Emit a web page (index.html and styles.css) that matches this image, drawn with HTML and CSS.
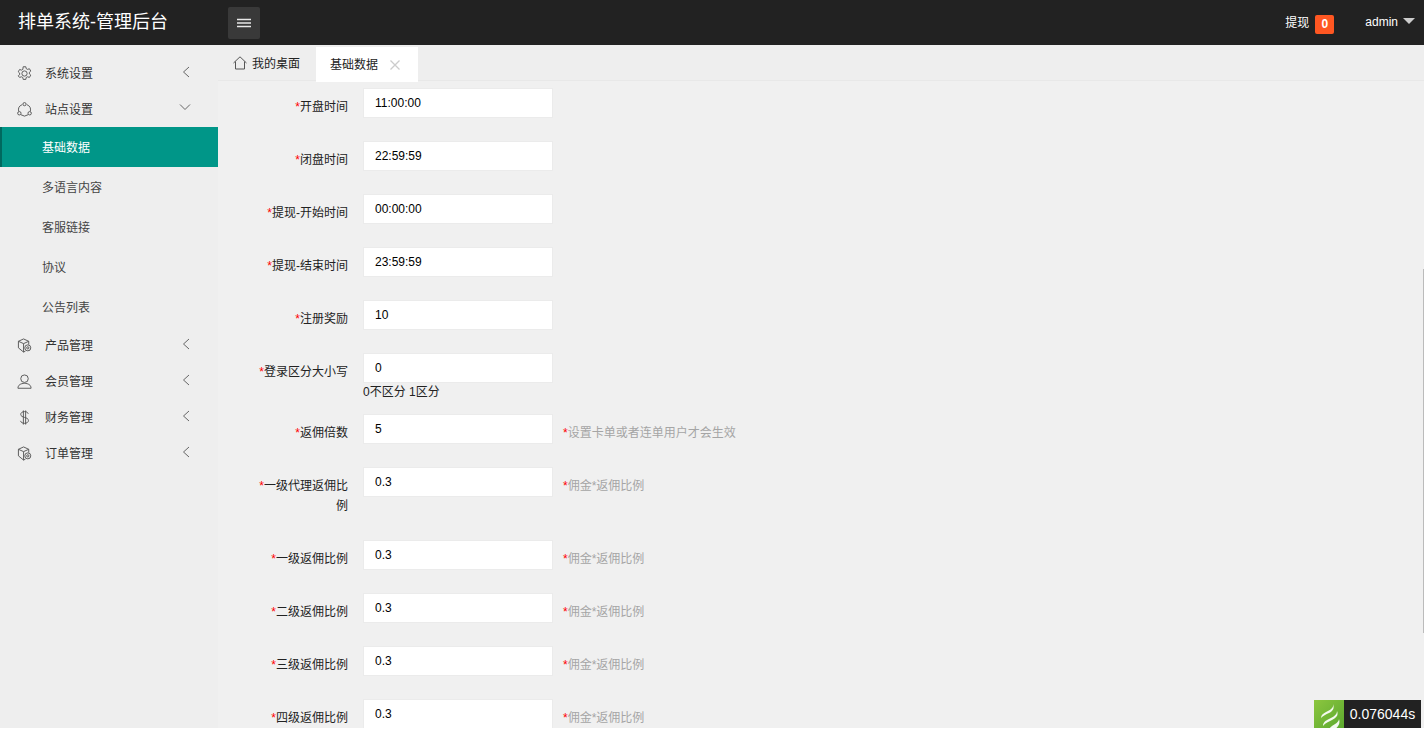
FILE: index.html
```html
<!DOCTYPE html>
<html lang="zh-CN">
<head>
<meta charset="utf-8">
<title>排单系统-管理后台</title>
<link rel="stylesheet" href="styles.css">
</head>
<body>
<div class="app">
  <header class="topbar">
    <div class="logo">排单系统-管理后台</div>
    <button class="toggle" aria-label="菜单">
      <svg width="14" height="10" viewBox="0 0 14 10"><path d="M0 1.500h14M0 5h14M0 8.500h14" stroke="#e8e8e8" stroke-width="1.300" fill="none"/></svg>
    </button>
    <div class="top-right">
      <span class="withdraw">提现</span><span class="badge">0</span>
      <span class="user">admin</span><span class="caret"></span>
    </div>
  </header>
  <div class="body">
    <aside class="side">
      <div class="menu">
        <svg class="micon" viewBox="0 0 16 16"><circle cx="8" cy="8" r="2.800"/><path d="M6.600 .8h2.800l.4 2 1.500.8 1.900-.7 1.500 2.500-1.500 1.300v1.700l1.500 1.300-1.500 2.500-1.900-.7-1.500.8-.4 2H6.600l-.4-2-1.500-.8-1.900.7L1.300 10.500l1.500-1.300V7.500L1.300 6.200l1.500-2.500 1.900.7 1.500-.8z"/></svg>
        <span class="mtext">系统设置</span>
        <svg class="arrow" viewBox="0 0 8 12"><path d="M7 1 1.500 6 7 11"/></svg>
      </div>
      <div class="menu">
        <svg class="micon" viewBox="0 0 16 16"><path d="M5.500 2.800A6.200 6.200 0 0 0 1.800 10M10.500 2.800A6.200 6.200 0 0 1 14.200 10M4 13.500a6.500 6.500 0 0 0 8 0"/><circle cx="8" cy="2.300" r="1.700"/><circle cx="2.500" cy="12" r="1.800"/><circle cx="13.500" cy="12" r="1.800"/></svg>
        <span class="mtext">站点设置</span>
        <svg class="arrow-down" viewBox="0 0 12 8"><path d="M1 1.500 6 6.500l5-5"/></svg>
      </div>
      <a class="sub active">基础数据</a>
      <a class="sub">多语言内容</a>
      <a class="sub">客服链接</a>
      <a class="sub">协议</a>
      <a class="sub">公告列表</a>
      <div class="menu">
        <svg class="micon" viewBox="0 0 16 16"><path d="M7 1 1.500 3.500v7L7 15l2-1M1.500 3.500 7 6v9M7 6l5.500-2.500L7 1M12.500 3.500V7"/><circle cx="11.500" cy="10.500" r="3.200"/><circle cx="11.500" cy="10.500" r="1.200"/></svg>
        <span class="mtext">产品管理</span>
        <svg class="arrow" viewBox="0 0 8 12"><path d="M7 1 1.500 6 7 11"/></svg>
      </div>
      <div class="menu">
        <svg class="micon" viewBox="0 0 16 16"><circle cx="8" cy="5" r="4"/><path d="M1 15.200c0-3.500 3-5.200 7-5.200s7 1.700 7 5.200z"/></svg>
        <span class="mtext">会员管理</span>
        <svg class="arrow" viewBox="0 0 8 12"><path d="M7 1 1.500 6 7 11"/></svg>
      </div>
      <div class="menu">
        <svg class="micon" viewBox="0 0 16 16"><path d="M12 4c-.5-1.500-2-2.300-4-2.300-2.300 0-4 1.200-4 3 0 4 8.200 2.400 8.200 6.500 0 1.800-1.800 3-4.200 3-2.200 0-3.800-1-4.300-2.600M6.800.5v15M9.200.5v15"/></svg>
        <span class="mtext">财务管理</span>
        <svg class="arrow" viewBox="0 0 8 12"><path d="M7 1 1.500 6 7 11"/></svg>
      </div>
      <div class="menu">
        <svg class="micon" viewBox="0 0 16 16"><path d="M7 1 1.500 3.500v7L7 15l2-1M1.500 3.500 7 6v9M7 6l5.500-2.500L7 1M12.500 3.500V7"/><circle cx="11.500" cy="10.500" r="3.200"/><circle cx="11.500" cy="10.500" r="1.200"/></svg>
        <span class="mtext">订单管理</span>
        <svg class="arrow" viewBox="0 0 8 12"><path d="M7 1 1.500 6 7 11"/></svg>
      </div>
    </aside>
    <main class="main">
      <nav class="tabs">
        <div class="tab">
          <svg class="home" viewBox="0 0 14 14"><path d="M.5 7 7 .8 13.500 7M2.500 5.500v7.500h9V5.500"/></svg>我的桌面
        </div>
        <div class="tab current">基础数据<svg class="close" viewBox="0 0 10 10"><path d="M.5.500l9 9M9.500.500l-9 9"/></svg></div>
      </nav>
      <form class="form">
        <div class="row"><label class="lab"><i>*</i>开盘时间</label><input class="inp" value="11:00:00"></div>
        <div class="row"><label class="lab"><i>*</i>闭盘时间</label><input class="inp" value="22:59:59"></div>
        <div class="row"><label class="lab"><i>*</i>提现-开始时间</label><input class="inp" value="00:00:00"></div>
        <div class="row"><label class="lab"><i>*</i>提现-结束时间</label><input class="inp" value="23:59:59"></div>
        <div class="row"><label class="lab"><i>*</i>注册奖励</label><input class="inp" value="10"></div>
        <div class="row row-help"><label class="lab"><i>*</i>登录区分大小写</label><div class="field"><input class="inp" value="0"><div class="help">0不区分 1区分</div></div></div>
        <div class="row"><label class="lab"><i>*</i>返佣倍数</label><input class="inp" value="5"><span class="tip"><i>*</i>设置卡单或者连单用户才会生效</span></div>
        <div class="row row-tall"><label class="lab"><i>*</i>一级代理返佣比例</label><input class="inp" value="0.3"><span class="tip"><i>*</i>佣金*返佣比例</span></div>
        <div class="row"><label class="lab"><i>*</i>一级返佣比例</label><input class="inp" value="0.3"><span class="tip"><i>*</i>佣金*返佣比例</span></div>
        <div class="row"><label class="lab"><i>*</i>二级返佣比例</label><input class="inp" value="0.3"><span class="tip"><i>*</i>佣金*返佣比例</span></div>
        <div class="row"><label class="lab"><i>*</i>三级返佣比例</label><input class="inp" value="0.3"><span class="tip"><i>*</i>佣金*返佣比例</span></div>
        <div class="row"><label class="lab"><i>*</i>四级返佣比例</label><input class="inp" value="0.3"><span class="tip"><i>*</i>佣金*返佣比例</span></div>
      </form>
      <div class="scroll"></div>
      <div class="trace">
        <svg class="trace-logo" viewBox="0 0 30 30">
          <defs><linearGradient id="lg" x1="0" y1="0" x2="1" y2="1"><stop offset="0" stop-color="#8cc63f"/><stop offset="1" stop-color="#5aa82e"/></linearGradient></defs>
          <rect width="30" height="30" fill="url(#lg)"/>
          <path d="M19 4c1 4-3 6-7 8-3 1.500-5 3-5 6 2-2.500 5-3.500 8-5 3-1.500 6-4 4-9z" fill="#fff" opacity=".92"/>
          <path d="M23 11c0 4-4 6-8 8-3 1.500-6 3-6 7 2-3 6-4.500 9-6 3.500-1.700 7-4.500 5-9z" fill="#fff" opacity=".92"/>
          <path d="M25 19c0 3-4 5-7 7-1.500 1-2.500 2-3 4h5c2-1.500 7-5 5-11z" fill="#fff" opacity=".92"/>
        </svg>
        <span class="trace-time">0.076044s</span>
      </div>
    </main>
  </div>
</div>
</body>
</html>
```
FILE: styles.css
```css
* { box-sizing: border-box; }
html, body { margin: 0; padding: 0; height: 100%; overflow: hidden; background: #fff; }
body { font: 12px/1.5 "Liberation Sans", "Noto Sans CJK SC", Arial, sans-serif; color: #222; }
.app { height: 728px; display: flex; flex-direction: column; overflow: hidden; }

.topbar { height: 45px; flex: none; background: #222; display: flex; align-items: center; color: #fff; }
.logo { width: 228px; padding-left: 18px; font-size: 18px; line-height: 45px; }
.toggle { width: 32px; height: 32px; align-self: flex-start; margin-top: 7px; border: 0; border-radius: 2px; background: #393939; display: flex; align-items: center; justify-content: center; padding: 0; }
.top-right { margin-left: auto; display: flex; align-items: center; padding-right: 9px; }
.withdraw { margin-right: 6px; }
.badge { width: 19px; height: 19px; margin-top: 3px; background: #ff5722; border-radius: 2px; font-weight: 700; line-height: 19px; text-align: center; }
.user { margin-left: 31px; margin-top: -1px; }
.caret { margin-left: 5px; margin-top: -4px; border: 6px solid transparent; border-top: 6px solid #ccc; border-bottom: 0; }

.body { flex: 1; display: flex; min-height: 0; }
.side { width: 218px; flex: none; padding-top: 10px; background: #eee; color: #333; }
.menu { height: 36px; display: flex; align-items: center; padding-left: 17px; }
.micon { width: 15px; height: 15px; fill: none; stroke: #555; stroke-width: 1; }
.mtext { margin-left: 13px; margin-top: 2px; }
.arrow { width: 8px; height: 12px; margin-left: 89px; margin-top: -2px; fill: none; stroke: #666; stroke-width: 1; }
.arrow-down { width: 12px; height: 8px; margin-left: 86px; margin-top: -4px; fill: none; stroke: #666; stroke-width: 1; }
.sub { display: block; height: 40px; padding-left: 42px; line-height: 42px; color: #444; }
.sub.active { background: #009688; border-left: 2px solid #00695f; padding-left: 40px; color: #fff; }

.main { position: relative; flex: 1; min-width: 0; background: #f0f0f0; overflow: hidden; }
.tabs { height: 36px; display: flex; padding-top: 2px; background: #eee; border-bottom: 1px solid #e8e8e8; }
.tab { width: 98px; padding-left: 15px; display: flex; align-items: center; height: 34px; color: #222; }
.home { width: 14px; height: 14px; margin-right: 5px; margin-top: -3px; fill: none; stroke: #555; stroke-width: 1; }
.tab.current { width: 102px; padding-left: 14px; background: #fff; height: 35px; }
.close { width: 10px; height: 10px; margin-left: 12px; fill: none; stroke: #ccc; stroke-width: 1.300; }

.form { padding-top: 7px; }
.row { display: flex; align-items: flex-start; height: 53px; }
.row-help { height: 61px; }
.row-tall { height: 73px; }
.lab { width: 100px; flex: none; margin-left: 30px; margin-right: 15px; padding-top: 9px; text-align: right; line-height: 20px; color: #222; }
.lab i, .tip i { color: #f00; font-style: normal; }
.inp { display: block; width: 190px; height: 30px; padding: 0 11px; border: 1px solid #ebebeb; background: #fff; font: 12px "Liberation Sans", Arial, sans-serif; color: #000; outline: 0; }
.field { width: 190px; }
.help { line-height: 18px; color: #222; white-space: nowrap; font-size: 12px; }
.tip { margin-left: 10px; padding-top: 9px; line-height: 20px; color: #a5a5a5; white-space: nowrap; }

.scroll { position: absolute; right: 0; top: 224px; width: 1px; height: 364px; background: #bbb; }
.trace { position: absolute; right: 3px; bottom: 0; display: flex; height: 28px; }
.trace-logo { width: 30px; height: 30px; }
.trace-time { width: 77px; background: #222; color: #fff; font-size: 14px; line-height: 28px; text-align: center; }
```
